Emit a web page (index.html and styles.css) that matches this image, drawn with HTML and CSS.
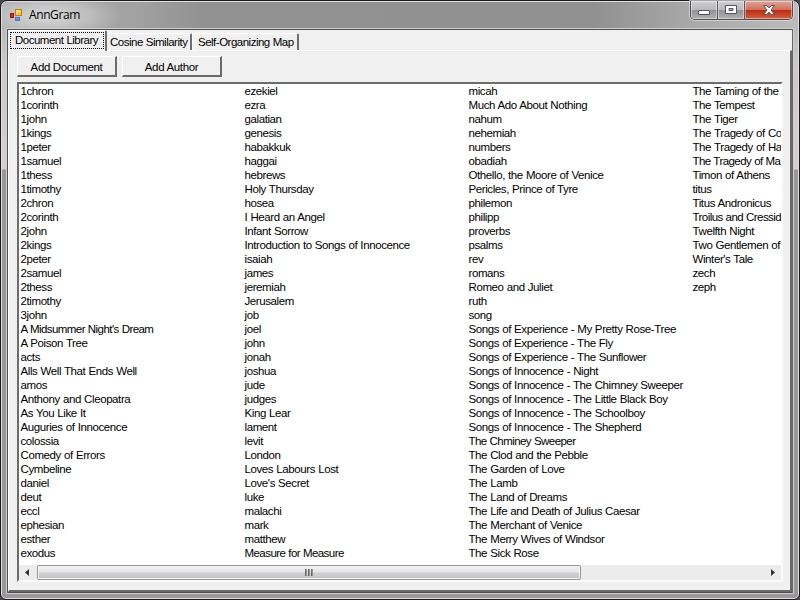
FILE: index.html
```html
<!DOCTYPE html>
<html lang="en">
<head>
<meta charset="utf-8">
<title>AnnGram</title>
<link rel="stylesheet" href="styles.css">
</head>
<body>
<div class="window">
  <header class="titlebar">
    <svg class="app-icon" width="14" height="14" viewBox="0 0 14 14">
      <defs>
        <linearGradient id="gold" x1="0" y1="0" x2="1" y2="1"><stop offset="0" stop-color="#ffeea0"/><stop offset="1" stop-color="#f0b010"/></linearGradient>
        <linearGradient id="blue" x1="0" y1="0" x2="0" y2="1"><stop offset="0" stop-color="#8ab8f8"/><stop offset="1" stop-color="#3c78e0"/></linearGradient>
      </defs>
      <rect x="5.5" y="1.5" width="6" height="6" fill="url(#gold)" stroke="#b88410"/>
      <rect x="0.5" y="5.500" width="3" height="4" fill="#e03018" stroke="#981408"/>
      <rect x="5.500" y="9.500" width="4" height="3" fill="url(#blue)" stroke="#4a78d0"/>
    </svg>
    <h1 class="title">AnnGram</h1>
    <div class="caption-buttons">
      <span class="caption min"><svg width="12" height="6" viewBox="0 0 12 6"><rect x=".5" y=".5" width="11" height="4" rx=".5" fill="#fff" stroke="#505468"/></svg></span>
      <span class="caption max"><svg width="12" height="10" viewBox="0 0 12 10"><path fill="#fff" fill-rule="evenodd" stroke="#505468" d="M.5.5h11v8H.5zM4 3.500h4v2H4z"/></svg></span>
      <span class="caption close"><svg width="12" height="10" viewBox="0 0 12 10"><path fill="#fff" stroke="#54485a" stroke-width=".9" d="M.6.5h3.200L6 2.900 8.200.5h3.200L8 5l3.400 4.500H8.200L6 7.100 3.800 9.500H.6L4 5z"/></svg></span>
    </div>
  </header>
  <main class="client">
    <nav class="tabs">
      <span class="tab selected"><span class="focus">Document Library</span></span>
      <span class="tab second">Cosine Similarity</span>
      <span class="tab third">Self-Organizing Map</span>
    </nav>
    <section class="page">
      <div class="actions">
        <button>Add Document</button>
        <button>Add Author</button>
      </div>
      <div class="listbox">
        <div class="columns">
          <ul>
            <li>1chron</li><li>1corinth</li><li>1john</li><li>1kings</li><li>1peter</li><li>1samuel</li><li>1thess</li><li>1timothy</li>
            <li>2chron</li><li>2corinth</li><li>2john</li><li>2kings</li><li>2peter</li><li>2samuel</li><li>2thess</li><li>2timothy</li>
            <li>3john</li><li class="tight">A Midsummer Night's Dream</li><li>A Poison Tree</li><li>acts</li><li>Alls Well That Ends Well</li><li>amos</li>
            <li>Anthony and Cleopatra</li><li>As You Like It</li><li>Auguries of Innocence</li><li>colossia</li><li>Comedy of Errors</li>
            <li>Cymbeline</li><li>daniel</li><li>deut</li><li>eccl</li><li>ephesian</li><li>esther</li><li>exodus</li>
          </ul>
          <ul>
            <li>ezekiel</li><li>ezra</li><li>galatian</li><li>genesis</li><li>habakkuk</li><li>haggai</li><li>hebrews</li><li>Holy Thursday</li>
            <li>hosea</li><li>I Heard an Angel</li><li>Infant Sorrow</li><li>Introduction to Songs of Innocence</li><li>isaiah</li><li>james</li>
            <li>jeremiah</li><li>Jerusalem</li><li>job</li><li>joel</li><li>john</li><li>jonah</li><li>joshua</li><li>jude</li><li>judges</li>
            <li>King Lear</li><li>lament</li><li>levit</li><li>London</li><li>Loves Labours Lost</li><li>Love's Secret</li><li>luke</li>
            <li>malachi</li><li>mark</li><li>matthew</li><li class="tight">Measure for Measure</li>
          </ul>
          <ul>
            <li>micah</li><li>Much Ado About Nothing</li><li>nahum</li><li>nehemiah</li><li>numbers</li><li>obadiah</li>
            <li>Othello, the Moore of Venice</li><li>Pericles, Prince of Tyre</li><li>philemon</li><li>philipp</li><li>proverbs</li><li>psalms</li>
            <li>rev</li><li>romans</li><li>Romeo and Juliet</li><li>ruth</li><li>song</li><li>Songs of Experience - My Pretty Rose-Tree</li>
            <li>Songs of Experience - The Fly</li><li>Songs of Experience - The Sunflower</li><li>Songs of Innocence - Night</li>
            <li>Songs of Innocence - The Chimney Sweeper</li><li>Songs of Innocence - The Little Black Boy</li>
            <li>Songs of Innocence - The Schoolboy</li><li>Songs of Innocence - The Shepherd</li><li class="tight">The Chminey Sweeper</li>
            <li>The Clod and the Pebble</li><li>The Garden of Love</li><li>The Lamb</li><li>The Land of Dreams</li>
            <li>The Life and Death of Julius Caesar</li><li>The Merchant of Venice</li><li>The Merry Wives of Windsor</li><li>The Sick Rose</li>
          </ul>
          <ul>
            <li>The Taming of the</li><li>The Tempest</li><li>The Tiger</li><li>The Tragedy of Co</li><li>The Tragedy of Ha</li>
            <li class="tight">The Tragedy of Ma</li><li>Timon of Athens</li><li>titus</li><li>Titus Andronicus</li><li class="tight">Troilus and Cressid</li>
            <li>Twelfth Night</li><li>Two Gentlemen of</li><li>Winter's Tale</li><li>zech</li><li>zeph</li>
          </ul>
        </div>
        <div class="scrollbar">
          <svg class="arrow" width="4" height="7" viewBox="0 0 4 7"><path fill="#333" d="M4 0v7L0 3.500z"/></svg>
          <div class="track"><div class="thumb"><i></i><i></i><i></i></div></div>
          <svg class="arrow" width="4" height="7" viewBox="0 0 4 7"><path fill="#333" d="M0 0v7l4-3.500z"/></svg>
        </div>
      </div>
    </section>
  </main>
</div>
</body>
</html>
```
FILE: styles.css
```css
* { box-sizing: border-box; }
body {
  margin: 0;
  width: 800px;
  height: 600px;
  overflow: hidden;
  background: #4a4a4a;
  font-family: "Liberation Sans", Arial, sans-serif;
  font-size: 11.5px;
  letter-spacing: -.4px;
  word-spacing: .3px;
  color: #000;
}
.window {
  width: 800px;
  height: 600px;
  padding: 0 6px 6px 5px;
  border: 1px solid #1c1820;
  border-radius: 7px 7px 6px 6px;
  box-shadow: inset 0 0 0 1px #dedede;
  background: linear-gradient(#aaa 0, #bbb 28px, #cecaca 70px, #d4d0d0 168px, #999797 169px, #999797 100%);
}
.titlebar {
  display: flex;
  align-items: flex-start;
  height: 27px;
  margin: 1px -5px 0 -4px;
  border-radius: 6px 6px 0 0;
  background:
    radial-gradient(ellipse 75px 24px at 45px 14px, rgba(225,225,225,.85), rgba(210,210,210,.5) 60%, transparent),
    linear-gradient(90deg, #aaa 0, #a2a2a2 130px, #929292 200px, #909090 590px, #a9a9a9 690px, #bbb 100%);
}
.app-icon { margin: 6px 0 0 8px; }
.title {
  margin: 5px 0 0 5px;
  font: 12px/16px "Open Sans", "Noto Sans", sans-serif;
  letter-spacing: -.4px;
}
.caption-buttons {
  display: flex;
  height: 19px;
  margin: -1px 5px 0 auto;
  border: 1px solid #4d4b50;
  border-top: 0;
  border-radius: 0 0 5px 5px;
  box-shadow: 0 0 0 1px rgba(225,225,225,.7);
  overflow: hidden;
}
.caption {
  display: flex;
  align-items: center;
  justify-content: center;
  width: 27px;
  border-right: 1px solid #5b5960;
  box-shadow: inset 0 0 0 1px rgba(255,255,255,.45);
  background: linear-gradient(#cfcfcf, #b9b9b9 48%, #939393 52%, #b0b0b0);
}
.caption.min { padding-top: 6px; }
.caption.close {
  width: 47px;
  border-right: 0;
  background: linear-gradient(#e2a596, #d0705c 48%, #bb2c13 52%, #d65f3c);
}
.client {
  height: 564px;
  margin-left: 1px;
  border: 1px solid #505050;
  border-right-color: #646464;
  background: #f0f0f0;
  padding-top: 1px;
  box-shadow: 0 0 0 1px #cfcfcf;
}
.tabs {
  display: flex;
  align-items: flex-end;
  height: 19px;
  padding-left: 1px;
}
.tab {
  height: 17px;
  border: solid;
  border-width: 1px 2px 0 1px;
  border-color: #fff #6e6e6e #fff #fff;
  border-radius: 2px 2px 0 0;
  line-height: 17px;
  letter-spacing: -.5px;
  white-space: nowrap;
}
.tab.selected {
  width: 98px;
  height: 21px;
  margin: 0 0 -1px;
  padding: 1px 1px 0 0;
  background: #f0f0f0;
  position: relative;
}
.focus {
  display: block;
  height: 17px;
  border: 1px dotted #000;
  line-height: 15px;
  padding-left: 4px;
}
.tab.second { width: 85px; padding-left: 3px; border-left: 0; }
.tab.third { width: 107px; padding-left: 5px; }
.page {
  height: 542px;
  padding: 5px 7px 0 8px;
  border: solid;
  border-width: 1px 2px 2px 1px;
  border-color: #fff #696969 #696969 #fff;
}
.actions { display: flex; gap: 5px; }
button {
  width: 100px;
  height: 21px;
  padding: 1px 0 0;
  border: solid;
  border-width: 1px 2px 2px 1px;
  border-color: #fff #6c6c6c #6c6c6c #fff;
  background: #f0f0f0;
  font: inherit;
  letter-spacing: -.35px;
  color: inherit;
}
.listbox {
  width: 766px;
  height: 500px;
  margin-top: 5px;
  border: solid;
  border-width: 2px;
  border-color: #6c6c6c #fafafa #fafafa #6c6c6c;
  background: #fff;
  overflow: hidden;
}
.columns {
  display: grid;
  grid-template-columns: repeat(4, 224px);
  width: 762px;
  height: 481px;
  overflow: hidden;
}
ul { margin: 0; padding: 0 0 0 1.5px; list-style: none; }
li { height: 14px; line-height: 14px; white-space: nowrap; }
.tight { letter-spacing: -.56px; }
.scrollbar {
  display: flex;
  align-items: center;
  height: 15px;
  padding: 0 6px;
  background: #ececec;
}
.track { flex: 1; margin: 0 8px; }
.thumb {
  display: flex;
  justify-content: center;
  align-items: center;
  gap: 1px;
  width: 544px;
  height: 15px;
  border: 1px solid #959595;
  border-radius: 2px;
  box-shadow: inset 0 0 0 1px #f5f5f5;
  background: linear-gradient(#f3f3f3, #e6e6e7 48%, #d0d1d4 52%, #c2c3c7);
}
.thumb i { width: 2px; height: 7px; background: linear-gradient(90deg, #555, #aaa); }
```
